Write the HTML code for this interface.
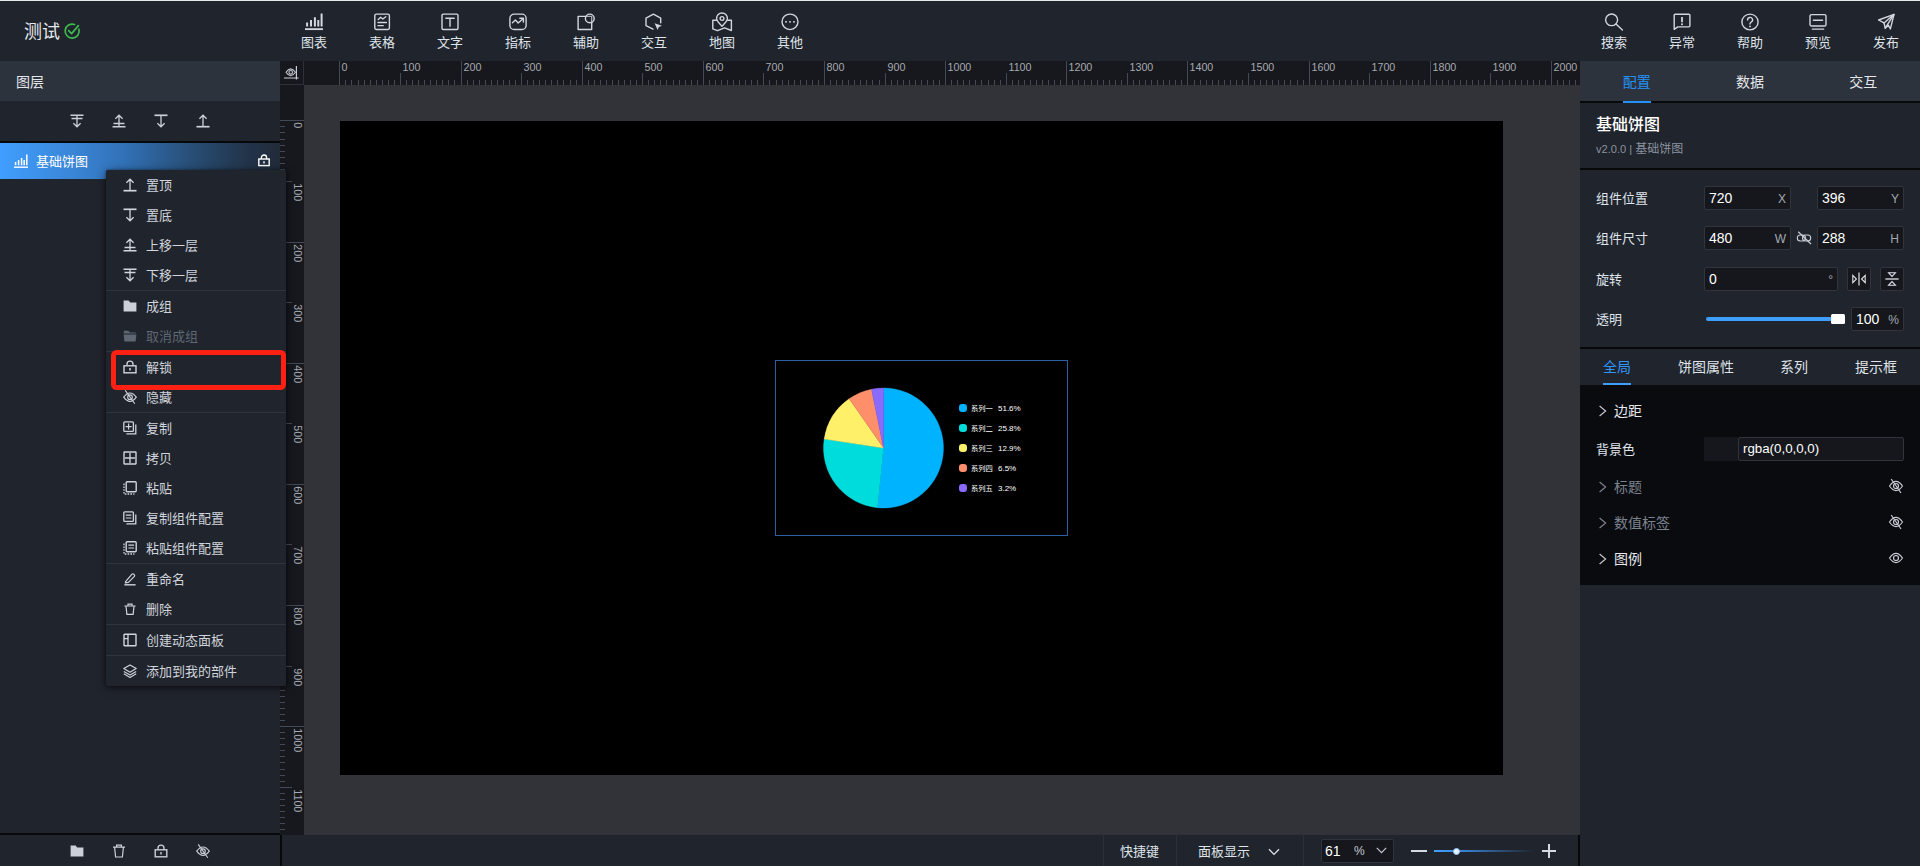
<!DOCTYPE html>
<html lang="zh-CN">
<head>
<meta charset="utf-8">
<title>测试</title>
<style>
*{box-sizing:border-box;margin:0;padding:0}
html,body{width:1920px;height:866px;overflow:hidden;background:#20242c}
body{position:relative;font-family:"Liberation Sans","Noto Sans CJK SC",sans-serif;font-size:13px;color:#d5d9e0;-webkit-font-smoothing:antialiased}
.abs{position:absolute}
svg{display:block;overflow:visible}
.ic{fill:none;stroke:currentColor;stroke-width:1.3;stroke-linecap:butt;stroke-linejoin:miter}
/* top bar */
#topline{left:0;top:0;width:1920px;height:1px;background:#e8e9eb}
#topbar{left:0;top:1px;width:1920px;height:60px;background:#20242c}
#title{left:24px;top:20px;height:24px;line-height:24px;font-size:18px;color:#e6e9ee;white-space:nowrap}
.nav{position:absolute;top:0;width:68px;height:60px;text-align:center;color:#dfe3ea}
.nav svg{position:absolute;left:25px;top:12.5px;width:18px;height:17.5px}
.nav span{position:absolute;left:0;width:68px;top:34px;height:18px;line-height:18px;font-size:13px;white-space:nowrap}
.nic{fill:none;stroke:#d3d6e0;stroke-width:1.4;stroke-linejoin:round;stroke-linecap:round}
/* left panel */
#left{left:0;top:61px;width:280px;height:805px;background:#20242c}
#lhead{left:0;top:0;width:280px;height:40px;background:#2d333d;line-height:42px;padding-left:16px;font-size:14px;color:#e3e6eb}
#ltools{left:0;top:40px;width:280px;height:40px;color:#ccd0d8}
#ltools svg,#lbot svg{position:absolute;width:14px;height:14px}
#lline{left:0;top:80px;width:280px;height:2px;background:#07080a}
#layer{left:0;top:82px;width:280px;height:36px;background:linear-gradient(90deg,#409eff 0%,#3a86d8 25%,#3170b5 45%,#2b5a8c 60%,#264566 75%,#22344a 88%,#212b39 100%);color:#fff}
#layer .t{left:36px;top:0;line-height:37px;font-size:13px;color:#fff;white-space:nowrap}
#lbotline{left:0;top:772px;width:280px;height:2px;background:#07080a}
#lbot{left:0;top:774px;width:280px;height:31px;color:#ccd0d8}
/* context menu */
#menu{left:106px;top:170px;width:180px;height:516px;background:#20242c;border-radius:2px;box-shadow:0 2px 10px rgba(0,0,0,.55),0 0 3px rgba(0,0,0,.4);color:#d0d4dc;z-index:20}
.mi{position:relative;height:30px;line-height:31px;padding-left:40px;font-size:13px;white-space:nowrap}
.mi svg{position:absolute;left:17px;top:8px;width:14px;height:14px}
.mi.dis{color:#5f6773}
.ms{height:1px;background:#2e333c}
#redbox{left:111px;top:350px;width:175px;height:40px;border:5px solid #ff2014;border-radius:5.5px;z-index:30}
/* rulers / canvas */
#stage{left:280px;top:61px;width:1300px;height:774px;background:#313338;overflow:hidden}
#rtop{left:24px;top:0;width:1276px;height:24px;background:#16181d}
#rleft{left:0;top:24px;width:24px;height:750px;background:#16181d}
#rcorner{left:0;top:0;width:24px;height:24px;background:#16181d;border-right:1px solid #2c3038;border-bottom:1px solid #2c3038;color:#c9cdd6}
#screen{left:60px;top:60px;width:1162.5px;height:653.5px;background:#000}
#comp{left:495px;top:299px;width:292.5px;height:175.5px;border:1px solid #2a5fa6}
/* bottom bar */
#bbar{left:280px;top:835px;width:1300px;height:31px;background:#20242c;border-left:2px solid #07080a;border-right:2px solid #07080a}
.vsep{position:absolute;top:0;width:1px;height:31px;background:#2b2f38}
/* right panel */
#right{left:1580px;top:61px;width:340px;height:805px;background:#20242c}
#rtabs{left:0;top:0;width:340px;height:40px;background:#2d333d}
#rtabs div{position:absolute;top:0;width:113.33px;height:40px;line-height:42.5px;text-align:center;font-size:14px;color:#e3e6eb}
.bline{position:absolute;left:0;width:340px;height:2px;background:#07080a}
.lbl{position:absolute;left:16px;height:24px;line-height:25px;font-size:13px;color:#dfe3ea;white-space:nowrap}
.inp{position:absolute;height:24px;background:#15171c;border:1px solid #30343c;border-radius:2px;line-height:22px;font-size:14px;color:#fff;padding-left:4px;white-space:nowrap}
.inp i{position:absolute;right:4px;top:1px;font-style:normal;font-size:12px;color:#a4a9b3}
.sec{position:absolute;left:0;width:340px;height:36px;line-height:36px;font-size:14px;color:#e6e9ee}
.sec .tx{position:absolute;left:34px;top:0}
.sec svg.ch{position:absolute;left:18px;top:12px;width:9px;height:12px;color:#c3c7cf}
.sec svg.eye{position:absolute;left:309px;top:10px;width:14px;height:14px}
.sec.off{color:#7b838f}
.sec.off svg.ch{color:#7b838f}
</style>
</head>
<body>
<div class="abs" id="topline"></div>
<div class="abs" id="topbar"></div>
<div class="abs" id="title">测试</div>
<svg class="abs" style="left:63px;top:22px;width:18px;height:18px" viewBox="0 0 18 18"><path d="M15.9 7.2A7 7 0 1 1 11.6 2.5" fill="none" stroke="#3dbb4f" stroke-width="1.7" stroke-linecap="round"/><path d="M5.6 8.6L8.6 11.6L15.4 3.6" fill="none" stroke="#3dbb4f" stroke-width="1.7" stroke-linecap="round" stroke-linejoin="round"/></svg>

<div class="nav" style="left:280px"><svg viewBox="0 0 18 18" preserveAspectRatio="none"><path d="M0 16.6H18" stroke="#d3d6e0" stroke-width="1.9" fill="none"/><path d="M2.1 9.8V14M6 7.2V14M9.9 4.4V14M13.3 7.2V14M16.6 0.4V14" stroke="#d3d6e0" stroke-width="2" fill="none"/></svg><span>图表</span></div>
<div class="nav" style="left:348px"><svg viewBox="0 0 18 18" preserveAspectRatio="none"><rect x="1.8" y="1.2" width="14.6" height="15.8" rx="1.5" class="nic" stroke-width="1.7"/><path d="M5.2 6.6L7.6 4.4L9.8 6.2L12.8 3.8" class="nic" stroke-width="1.2"/><path d="M5 9.8H13.4M5 13H10.2" class="nic" stroke-width="1.5"/></svg><span>表格</span></div>
<div class="nav" style="left:416px"><svg viewBox="0 0 18 18" preserveAspectRatio="none"><rect x="1" y="1.2" width="16" height="15.8" rx="1.2" class="nic" stroke-width="1.8"/><path d="M4.8 5.4H13.2M9 5.4V13.6" class="nic" stroke-width="1.6" stroke-linecap="butt"/></svg><span>文字</span></div>
<div class="nav" style="left:484px"><svg viewBox="0 0 18 18" preserveAspectRatio="none"><rect x="0.9" y="1.2" width="16.2" height="15.8" rx="4.2" class="nic" stroke-width="1.5"/><path d="M3.4 10L6.4 7.2L9.2 10.2L14 6" class="nic" stroke-width="1.3"/><path d="M10.8 5.4H14.4V9.2" class="nic" stroke-width="1.3"/></svg><span>指标</span></div>
<div class="nav" style="left:552px"><svg viewBox="0 0 18 18" preserveAspectRatio="none"><path d="M8.6 3.4H1.1V17H14.7V9.4" class="nic" stroke-width="1.7" stroke-linejoin="miter" stroke-linecap="butt"/><circle cx="12.8" cy="5.6" r="4.4" class="nic" stroke-width="1.3"/><path d="M8.6 3.4H14.7V9.4" class="nic" stroke-width="1.1" opacity=".75"/></svg><span>辅助</span></div>
<div class="nav" style="left:620px"><svg viewBox="0 0 18 18" preserveAspectRatio="none"><path d="M8 16.6L1 12.9V5.2L8.4 1.2L15.7 5.2V10" class="nic" stroke-width="1.6" stroke-linejoin="miter" stroke-linecap="butt"/><path d="M9.6 10.6L17 13.2L13.8 14.4L12.6 17.6Z" fill="#d3d6e0" stroke="none"/></svg><span>交互</span></div>
<div class="nav" style="left:688px"><svg viewBox="0 0 18 18" preserveAspectRatio="none"><path d="M9 13.6C6 10.4 3.6 8.4 3.6 5.4A5.4 5.4 0 0 1 14.4 5.4C14.4 8.4 12 10.4 9 13.6Z" class="nic" stroke-width="1.4"/><circle cx="9" cy="5.6" r="1.9" class="nic" stroke-width="1.3"/><path d="M3.4 7.4H-0.2V16.4L4.4 18.2L11.6 15.2L18.4 18V7.4H14.6" class="nic" stroke-width="1.5" stroke-linejoin="miter" stroke-linecap="butt"/></svg><span>地图</span></div>
<div class="nav" style="left:756px"><svg viewBox="0 0 18 18" preserveAspectRatio="none"><circle cx="9" cy="9.1" r="8" class="nic" stroke-width="1.5"/><circle cx="5" cy="9.1" r="1" fill="#d3d6e0"/><circle cx="9" cy="9.1" r="1" fill="#d3d6e0"/><circle cx="13" cy="9.1" r="1" fill="#d3d6e0"/></svg><span>其他</span></div>

<div class="nav" style="left:1580px"><svg viewBox="0 0 18 18" preserveAspectRatio="none"><circle cx="6.6" cy="7" r="6" class="nic" stroke-width="1.4"/><path d="M11 11.4L17.4 17.6" class="nic" stroke-width="1.5"/></svg><span>搜索</span></div>
<div class="nav" style="left:1648px"><svg viewBox="0 0 18 18" preserveAspectRatio="none"><path d="M1.2 16.8V2.4Q1.2 1.3 2.3 1.3H15.8Q16.9 1.3 16.9 2.4V13.2Q16.9 14.3 15.8 14.3H4.8Z" class="nic" stroke-width="1.7"/><path d="M9 4.2V9.4" stroke="#d3d6e0" stroke-width="1.8" fill="none"/><circle cx="9" cy="11.6" r="1" fill="#d3d6e0"/></svg><span>异常</span></div>
<div class="nav" style="left:1716px"><svg viewBox="0 0 18 18" preserveAspectRatio="none"><circle cx="9" cy="9.2" r="8.1" class="nic" stroke-width="1.5"/><path d="M6.6 7.2A2.5 2.5 0 1 1 10.4 9.2Q9 10 9 11.4" class="nic" stroke-width="1.4"/><circle cx="9" cy="13.8" r="0.9" fill="#d3d6e0"/></svg><span>帮助</span></div>
<div class="nav" style="left:1784px"><svg viewBox="0 0 18 18" preserveAspectRatio="none"><rect x="1" y="1.6" width="16" height="11.8" rx="1.6" class="nic" stroke-width="1.7"/><path d="M4.4 7.4H13.6" class="nic" stroke-width="1.8" stroke-linecap="butt"/><path d="M3.4 16.6H14.6" class="nic" stroke-width="1.5" stroke-linecap="butt"/></svg><span>预览</span></div>
<div class="nav" style="left:1852px"><svg viewBox="0 0 18 18" preserveAspectRatio="none"><path d="M17 1.4L1.6 7.2L7 10.2L8.2 15.6L11.4 12.6L13.4 16.4Z" class="nic" stroke-width="1.4" stroke-linejoin="miter"/><path d="M7 10.2L17 1.4L8.2 15.6" class="nic" stroke-width="1.2" stroke-linejoin="miter"/></svg><span>发布</span></div>
<div class="abs" id="left">
 <div class="abs" id="lhead">图层</div>
 <div class="abs" id="ltools">
  <svg style="left:70px;top:13px" viewBox="0 0 14 14" class="ic"><path d="M0.5 1.2H13.5M1.5 4.4H12.5" stroke-width="1.5"/><path d="M7 1.6V12.4M3.4 9.2L7 12.8L10.6 9.2"/></svg>
  <svg style="left:112px;top:13px" viewBox="0 0 14 14" class="ic"><path d="M1.5 9.6H12.5M0.5 12.8H13.5" stroke-width="1.5"/><path d="M7 12.4V1.6M3.4 4.8L7 1.2L10.6 4.8"/></svg>
  <svg style="left:154px;top:13px" viewBox="0 0 14 14" class="ic"><path d="M0.5 1.3H13.5" stroke-width="1.7"/><path d="M7 2V12.4M3.4 9.2L7 12.8L10.6 9.2"/></svg>
  <svg style="left:196px;top:13px" viewBox="0 0 14 14" class="ic"><path d="M0.5 12.7H13.5" stroke-width="1.7"/><path d="M7 12V1.6M3.4 4.8L7 1.2L10.6 4.8"/></svg>
 </div>
 <div class="abs" id="lline"></div>
 <div class="abs" id="layer">
  <svg class="abs" style="left:14px;top:11px;width:14px;height:14px" viewBox="0 0 14 14"><path d="M0 13.2H14" stroke="#fff" stroke-width="1.4" fill="none"/><path d="M1.6 8V11.2M4.6 6V11.2M7.6 4V11.2M10.2 6V11.2M12.8 0.4V11.2" stroke="#fff" stroke-width="1.5" fill="none"/></svg>
  <div class="abs t">基础饼图</div>
  <svg class="abs" style="left:258px;top:11px;width:12px;height:13px" viewBox="0 0 12 13"><rect x="0.8" y="5" width="10.4" height="6.6" fill="none" stroke="#fff" stroke-width="1.4"/><path d="M3.4 5V3.6A2.6 2.6 0 0 1 8.6 3.6V5" fill="none" stroke="#fff" stroke-width="1.3"/><path d="M6 7.2V9.6" stroke="#fff" stroke-width="1.4"/></svg>
 </div>
 <div class="abs" id="lbotline"></div>
 <div class="abs" id="lbot">
  <svg style="left:70px;top:9px" viewBox="0 0 14 14"><path d="M0.6 1.6H5.6L7.2 3.4H13.4V12.6H0.6Z" fill="#ccd0d8"/></svg>
  <svg style="left:112px;top:9px" viewBox="0 0 14 14" class="ic"><path d="M1 3.2H13M4.6 3V1.2H9.4V3M2.6 3.4L3.6 13H10.4L11.4 3.4" stroke-width="1.2"/></svg>
  <svg style="left:154px;top:9px" viewBox="0 0 14 14" class="ic"><rect x="1.2" y="5.8" width="11.6" height="7" stroke-width="1.4"/><path d="M4 5.8V4.2A3 3 0 0 1 10 4.2V5.8" stroke-width="1.3"/><path d="M7 8V10.6" stroke-width="1.4"/></svg>
  <svg style="left:196px;top:9px" viewBox="0 0 14 14" class="ic"><path d="M0.7 7.2Q7 -1.2 13.3 7.2Q7 15.6 0.7 7.2Z" stroke-width="1.1"/><circle cx="7" cy="7.2" r="2.3" stroke-width="1.1"/><path d="M2.2 0.4L11.8 13.8" stroke-width="1.1"/></svg>
 </div>
</div>
<div class="abs" id="stage">
 <div class="abs" id="screen"></div>
 <div class="abs" id="comp">
<svg class="abs" style="left:0;top:0;width:290px;height:173px" viewBox="0 0 290 173" font-family="Liberation Sans, Noto Sans CJK SC, sans-serif" font-size="7.3" fill="#fff">
<path d="M107.5 87L107.5 27A60 60 0 1 1 101.48 146.7Z" fill="#00b3ff" stroke="#00b3ff" stroke-width="0.4"/>
<path d="M107.5 87L101.48 146.7A60 60 0 0 1 48.18 77.99Z" fill="#00dcdc" stroke="#00dcdc" stroke-width="0.4"/>
<path d="M107.5 87L48.18 77.99A60 60 0 0 1 73.15 37.8Z" fill="#fff06a" stroke="#fff06a" stroke-width="0.4"/>
<path d="M107.5 87L73.15 37.8A60 60 0 0 1 95.52 28.21Z" fill="#ff8f6b" stroke="#ff8f6b" stroke-width="0.4"/>
<path d="M107.5 87L95.52 28.21A60 60 0 0 1 107.5 27Z" fill="#8a6bff" stroke="#8a6bff" stroke-width="0.4"/>
<rect x="183" y="43" width="8" height="8" rx="3.2" fill="#00b3ff"/>
<text x="195" y="49.7">系列一</text><text x="222" y="49.8" font-size="8">51.6%</text>
<rect x="183" y="63" width="8" height="8" rx="3.2" fill="#00dcdc"/>
<text x="195" y="69.7">系列二</text><text x="222" y="69.8" font-size="8">25.8%</text>
<rect x="183" y="83" width="8" height="8" rx="3.2" fill="#fff06a"/>
<text x="195" y="89.7">系列三</text><text x="222" y="89.8" font-size="8">12.9%</text>
<rect x="183" y="103" width="8" height="8" rx="3.2" fill="#ff8f6b"/>
<text x="195" y="109.7">系列四</text><text x="222" y="109.8" font-size="8">6.5%</text>
<rect x="183" y="123" width="8" height="8" rx="3.2" fill="#8a6bff"/>
<text x="195" y="129.7">系列五</text><text x="222" y="129.8" font-size="8">3.2%</text>
</svg>
 </div>
 <div class="abs" id="rtop">
<svg class="abs" style="left:0;top:0;width:1276px;height:24px" viewBox="0 0 1276 24" font-family="Liberation Sans, sans-serif" font-size="10.7" fill="#a6aab1">
<path d="M41.5 19V24M47.5 19V24M54.5 19V24M60.5 19V24M66.5 19V24M72.5 19V24M78.5 19V24M84.5 19V24M90.5 19V24M102.5 19V24M108.5 19V24M114.5 19V24M120.5 19V24M126.5 19V24M132.5 19V24M138.5 19V24M144.5 19V24M150.5 19V24M163.5 19V24M169.5 19V24M175.5 19V24M181.5 19V24M187.5 19V24M193.5 19V24M199.5 19V24M205.5 19V24M211.5 19V24M223.5 19V24M229.5 19V24M235.5 19V24M241.5 19V24M247.5 19V24M253.5 19V24M259.5 19V24M266.5 19V24M272.5 19V24M284.5 19V24M290.5 19V24M296.5 19V24M302.5 19V24M308.5 19V24M314.5 19V24M320.5 19V24M326.5 19V24M332.5 19V24M344.5 19V24M350.5 19V24M356.5 19V24M362.5 19V24M369.5 19V24M375.5 19V24M381.5 19V24M387.5 19V24M393.5 19V24M405.5 19V24M411.5 19V24M417.5 19V24M423.5 19V24M429.5 19V24M435.5 19V24M441.5 19V24M447.5 19V24M453.5 19V24M465.5 19V24M472.5 19V24M478.5 19V24M484.5 19V24M490.5 19V24M496.5 19V24M502.5 19V24M508.5 19V24M514.5 19V24M526.5 19V24M532.5 19V24M538.5 19V24M544.5 19V24M550.5 19V24M556.5 19V24M562.5 19V24M568.5 19V24M575.5 19V24M587.5 19V24M593.5 19V24M599.5 19V24M605.5 19V24M611.5 19V24M617.5 19V24M623.5 19V24M629.5 19V24M635.5 19V24M647.5 19V24M653.5 19V24M659.5 19V24M665.5 19V24M671.5 19V24M677.5 19V24M684.5 19V24M690.5 19V24M696.5 19V24M708.5 19V24M714.5 19V24M720.5 19V24M726.5 19V24M732.5 19V24M738.5 19V24M744.5 19V24M750.5 19V24M756.5 19V24M768.5 19V24M774.5 19V24M780.5 19V24M787.5 19V24M793.5 19V24M799.5 19V24M805.5 19V24M811.5 19V24M817.5 19V24M829.5 19V24M835.5 19V24M841.5 19V24M847.5 19V24M853.5 19V24M859.5 19V24M865.5 19V24M871.5 19V24M877.5 19V24M890.5 19V24M896.5 19V24M902.5 19V24M908.5 19V24M914.5 19V24M920.5 19V24M926.5 19V24M932.5 19V24M938.5 19V24M950.5 19V24M956.5 19V24M962.5 19V24M968.5 19V24M974.5 19V24M980.5 19V24M986.5 19V24M993.5 19V24M999.5 19V24M1011.5 19V24M1017.5 19V24M1023.5 19V24M1029.5 19V24M1035.5 19V24M1041.5 19V24M1047.5 19V24M1053.5 19V24M1059.5 19V24M1071.5 19V24M1077.5 19V24M1083.5 19V24M1089.5 19V24M1096.5 19V24M1102.5 19V24M1108.5 19V24M1114.5 19V24M1120.5 19V24M1132.5 19V24M1138.5 19V24M1144.5 19V24M1150.5 19V24M1156.5 19V24M1162.5 19V24M1168.5 19V24M1174.5 19V24M1180.5 19V24M1192.5 19V24M1198.5 19V24M1205.5 19V24M1211.5 19V24M1217.5 19V24M1223.5 19V24M1229.5 19V24M1235.5 19V24M1241.5 19V24M1253.5 19V24M1259.5 19V24M1265.5 19V24M1271.5 19V24" stroke="#434955" stroke-width="1" fill="none"/>
<path d="M96.5 12V24M217.5 12V24M338.5 12V24M459.5 12V24M581.5 12V24M702.5 12V24M823.5 12V24M944.5 12V24M1065.5 12V24M1186.5 12V24M35.5 0V24M157.5 0V24M278.5 0V24M399.5 0V24M520.5 0V24M641.5 0V24M762.5 0V24M883.5 0V24M1005.5 0V24M1126.5 0V24M1247.5 0V24" stroke="#434955" stroke-width="1" fill="none"/>
<text x="37.5" y="9.7">0</text>
<text x="98.5" y="9.7">100</text>
<text x="159.5" y="9.7">200</text>
<text x="219.5" y="9.7">300</text>
<text x="280.5" y="9.7">400</text>
<text x="340.5" y="9.7">500</text>
<text x="401.5" y="9.7">600</text>
<text x="461.5" y="9.7">700</text>
<text x="522.5" y="9.7">800</text>
<text x="583.5" y="9.7">900</text>
<text x="643.5" y="9.7">1000</text>
<text x="704.5" y="9.7">1100</text>
<text x="764.5" y="9.7">1200</text>
<text x="825.5" y="9.7">1300</text>
<text x="885.5" y="9.7">1400</text>
<text x="946.5" y="9.7">1500</text>
<text x="1007.5" y="9.7">1600</text>
<text x="1067.5" y="9.7">1700</text>
<text x="1128.5" y="9.7">1800</text>
<text x="1188.5" y="9.7">1900</text>
<text x="1249.5" y="9.7">2000</text>
</svg>
 </div>
 <div class="abs" id="rleft">
<svg class="abs" style="left:0;top:0;width:24px;height:750px" viewBox="0 0 24 750" font-family="Liberation Sans, sans-serif" font-size="10.7" fill="#a6aab1">
<path d="M0 41.5H5M0 47.5H5M0 54.5H5M0 60.5H5M0 66.5H5M0 72.5H5M0 78.5H5M0 84.5H5M0 90.5H5M0 102.5H5M0 108.5H5M0 114.5H5M0 120.5H5M0 126.5H5M0 132.5H5M0 138.5H5M0 144.5H5M0 150.5H5M0 163.5H5M0 169.5H5M0 175.5H5M0 181.5H5M0 187.5H5M0 193.5H5M0 199.5H5M0 205.5H5M0 211.5H5M0 223.5H5M0 229.5H5M0 235.5H5M0 241.5H5M0 247.5H5M0 253.5H5M0 259.5H5M0 266.5H5M0 272.5H5M0 284.5H5M0 290.5H5M0 296.5H5M0 302.5H5M0 308.5H5M0 314.5H5M0 320.5H5M0 326.5H5M0 332.5H5M0 344.5H5M0 350.5H5M0 356.5H5M0 362.5H5M0 369.5H5M0 375.5H5M0 381.5H5M0 387.5H5M0 393.5H5M0 405.5H5M0 411.5H5M0 417.5H5M0 423.5H5M0 429.5H5M0 435.5H5M0 441.5H5M0 447.5H5M0 453.5H5M0 465.5H5M0 472.5H5M0 478.5H5M0 484.5H5M0 490.5H5M0 496.5H5M0 502.5H5M0 508.5H5M0 514.5H5M0 526.5H5M0 532.5H5M0 538.5H5M0 544.5H5M0 550.5H5M0 556.5H5M0 562.5H5M0 568.5H5M0 575.5H5M0 587.5H5M0 593.5H5M0 599.5H5M0 605.5H5M0 611.5H5M0 617.5H5M0 623.5H5M0 629.5H5M0 635.5H5M0 647.5H5M0 653.5H5M0 659.5H5M0 665.5H5M0 671.5H5M0 677.5H5M0 684.5H5M0 690.5H5M0 696.5H5M0 708.5H5M0 714.5H5M0 720.5H5M0 726.5H5M0 732.5H5M0 738.5H5M0 744.5H5" stroke="#434955" stroke-width="1" fill="none"/>
<path d="M0 96.5H12M0 217.5H12M0 338.5H12M0 459.5H12M0 581.5H12M0 702.5H12M0 35.5H24M0 157.5H24M0 278.5H24M0 399.5H24M0 520.5H24M0 641.5H24" stroke="#434955" stroke-width="1" fill="none"/>
<text transform="translate(13.8 37.3) rotate(90)">0</text>
<text transform="translate(13.8 98.3) rotate(90)">100</text>
<text transform="translate(13.8 159.3) rotate(90)">200</text>
<text transform="translate(13.8 219.3) rotate(90)">300</text>
<text transform="translate(13.8 280.3) rotate(90)">400</text>
<text transform="translate(13.8 340.3) rotate(90)">500</text>
<text transform="translate(13.8 401.3) rotate(90)">600</text>
<text transform="translate(13.8 461.3) rotate(90)">700</text>
<text transform="translate(13.8 522.3) rotate(90)">800</text>
<text transform="translate(13.8 583.3) rotate(90)">900</text>
<text transform="translate(13.8 643.3) rotate(90)">1000</text>
<text transform="translate(13.8 704.3) rotate(90)">1100</text>
</svg>
 </div>
 <div class="abs" id="rcorner"><svg class="abs ic" style="left:4px;top:5px;width:15px;height:14px" viewBox="0 0 15 14"><path d="M2 6.3Q6.7 -0.5 11.4 6.3Q6.7 13.1 2 6.3Z" stroke-width="1.1"/><circle cx="6.7" cy="6.3" r="1.8" stroke-width="1.1"/><path d="M12.4 0V13.6M0 12H14.6" stroke-width="1.2"/></svg></div>
</div>
<div class="abs" id="bbar">
 <div class="vsep" style="left:821px"></div>
 <div class="vsep" style="left:894px"></div>
 <div class="vsep" style="left:1021px"></div>
 <div class="abs" style="left:838px;top:6px;line-height:22px;font-size:13px;color:#dfe3ea;white-space:nowrap">快捷键</div>
 <div class="abs" style="left:916px;top:6px;line-height:22px;font-size:13px;color:#dfe3ea;white-space:nowrap">面板显示</div>
 <svg class="abs ic" style="left:986px;top:13px;width:12px;height:8px;color:#dfe3ea" viewBox="0 0 12 8"><path d="M1 1.2L6 6.4L11 1.2" stroke-width="1.3"/></svg>
 <div class="abs" style="left:1038.6px;top:4px;width:73px;height:24px;background:#15171c;border:1px solid #30343c;border-radius:2px"></div>
 <div class="abs" style="left:1043px;top:5px;line-height:22px;font-size:14px;color:#fff">61</div>
 <div class="abs" style="left:1072px;top:5px;line-height:22px;font-size:12px;color:#c4c8d0">%</div>
 <svg class="abs ic" style="left:1094px;top:12px;width:11px;height:7px;color:#c4c8d0" viewBox="0 0 11 7"><path d="M0.8 0.8L5.5 5.6L10.2 0.8" stroke-width="1.2"/></svg>
 <div class="abs" style="left:1129px;top:15px;width:16px;height:2px;background:#d5d9e0"></div>
 <div class="abs" style="left:1152px;top:15px;width:100px;height:2px;background:linear-gradient(90deg,#409eff 0%,#3a8ae0 25%,rgba(58,130,210,.55) 60%,rgba(58,130,210,0) 100%)"></div>
 <div class="abs" style="left:1170.5px;top:12.5px;width:7px;height:7px;border-radius:50%;background:#e8f3ff;border:1.5px solid #8cc3fb"></div>
 <div class="abs" style="left:1260px;top:15px;width:14px;height:2px;background:#d5d9e0"></div>
 <div class="abs" style="left:1266px;top:9px;width:2px;height:14px;background:#d5d9e0"></div>
</div>
<div class="abs" id="menu">
 <div class="mi"><svg viewBox="0 0 14 14" class="ic"><path d="M0.5 12.7H13.5" stroke-width="1.7"/><path d="M7 12V1.6M3.4 4.8L7 1.2L10.6 4.8"/></svg>置顶</div>
 <div class="mi"><svg viewBox="0 0 14 14" class="ic"><path d="M0.5 1.3H13.5" stroke-width="1.7"/><path d="M7 2V12.4M3.4 9.2L7 12.8L10.6 9.2"/></svg>置底</div>
 <div class="mi"><svg viewBox="0 0 14 14" class="ic"><path d="M1.5 9.6H12.5M0.5 12.8H13.5" stroke-width="1.5"/><path d="M7 12.4V1.6M3.4 4.8L7 1.2L10.6 4.8"/></svg>上移一层</div>
 <div class="mi"><svg viewBox="0 0 14 14" class="ic"><path d="M0.5 1.2H13.5M1.5 4.4H12.5" stroke-width="1.5"/><path d="M7 1.6V12.4M3.4 9.2L7 12.8L10.6 9.2"/></svg>下移一层</div>
 <div class="ms"></div>
 <div class="mi"><svg viewBox="0 0 14 14"><path d="M0.6 1.6H5.6L7.2 3.4H13.4V12.6H0.6Z" fill="#ccd0d8"/></svg>成组</div>
 <div class="mi dis"><svg viewBox="0 0 14 14"><path d="M0.8 1.8H5.4L6.8 3.4H12.8V4.6H0.8Z" fill="#5f6773"/><path d="M0.6 5.6H13.4L12.6 12.6H1.4Z" fill="#5f6773"/></svg>取消成组</div>
 <div class="ms"></div>
 <div class="mi"><svg viewBox="0 0 14 14" class="ic"><rect x="1" y="5.8" width="12" height="7" stroke-width="1.4"/><path d="M4 5.8V4.2A3 3 0 0 1 10 4.2V5.8" stroke-width="1.3"/><path d="M7 8V10.6" stroke-width="1.5"/></svg>解锁</div>
 <div class="mi"><svg viewBox="0 0 14 14" class="ic"><path d="M0.7 7.2Q7 -1.2 13.3 7.2Q7 15.6 0.7 7.2Z" stroke-width="1.1"/><circle cx="7" cy="7.2" r="2.3" stroke-width="1.1"/><path d="M2.2 0.4L11.8 13.8" stroke-width="1.1"/></svg>隐藏</div>
 <div class="ms"></div>
 <div class="mi"><svg viewBox="0 0 14 14" class="ic"><rect x="0.8" y="0.8" width="9.6" height="9.6" rx="1" stroke-width="1.3"/><path d="M5.6 2.6V8.6M2.6 5.6H8.6" stroke-width="1.2"/><path d="M12.8 3.4V12.8H3.4" stroke-width="1.3"/></svg>复制</div>
 <div class="mi"><svg viewBox="0 0 14 14" class="ic"><rect x="1" y="1" width="12" height="12" rx="0.4" stroke-width="1.4"/><path d="M7 2V12M2 7H12" stroke-width="1.3"/></svg>拷贝</div>
 <div class="mi"><svg viewBox="0 0 14 14" class="ic"><rect x="3.2" y="0.8" width="10" height="10" rx="1" stroke-width="1.4"/><path d="M1 2.6V13H11.4" stroke-width="1.3" stroke-dasharray="1.6 1.2"/></svg>粘贴</div>
 <div class="mi"><svg viewBox="0 0 14 14" class="ic"><rect x="0.8" y="0.8" width="9.6" height="9.6" rx="1" stroke-width="1.3"/><path d="M2.8 4.2H8.4M2.8 7H8.4" stroke-width="1.2"/><path d="M12.8 3.4V12.8H3.4" stroke-width="1.3"/></svg>复制组件配置</div>
 <div class="mi"><svg viewBox="0 0 14 14" class="ic"><rect x="3.2" y="0.8" width="10" height="10" rx="1" stroke-width="1.4"/><path d="M5.4 4.2H11M5.4 7H11" stroke-width="1.2"/><path d="M1 2.6V13H11.4" stroke-width="1.3" stroke-dasharray="1.6 1.2"/></svg>粘贴组件配置</div>
 <div class="ms"></div>
 <div class="mi"><svg viewBox="0 0 14 14" class="ic"><path d="M1.4 12.8H12.6" stroke-width="1.4"/><path d="M2.6 9.6L9 2.2Q9.8 1.4 10.8 2.2L11.4 2.8Q12 3.6 11.4 4.4L5.4 10.4L2.4 10.8Z" stroke-width="1.2" stroke-linejoin="round"/></svg>重命名</div>
 <div class="mi"><svg viewBox="0 0 14 14" class="ic"><path d="M1.4 4H12.6M5 3.8V2.2H9V3.8M3 4.2L3.9 12.4H10.1L11 4.2" stroke-width="1.2"/></svg>删除</div>
 <div class="ms"></div>
 <div class="mi"><svg viewBox="0 0 14 14" class="ic"><rect x="1" y="1.2" width="12" height="11.6" rx="0.6" stroke-width="1.4"/><path d="M5 1.2V12.8M1 5.6H5" stroke-width="1.3"/></svg>创建动态面板</div>
 <div class="ms"></div>
 <div class="mi"><svg viewBox="0 0 14 14" class="ic"><path d="M7 1L13.2 4.6L7 8.2L0.8 4.6Z" stroke-width="1.2" stroke-linejoin="round"/><path d="M0.8 7.4L7 11L13.2 7.4M0.8 9.8L7 13.4L13.2 9.8" stroke-width="1.1" stroke-linejoin="round"/></svg>添加到我的部件</div>
</div>
<div class="abs" id="redbox"></div>
<div class="abs" id="right">
 <div class="abs" id="rtabs">
  <div style="left:0;color:#2491f7">配置</div>
  <div style="left:113.33px">数据</div>
  <div style="left:226.66px">交互</div>
 </div>
 <div class="bline" style="top:40px"></div>
 <div class="abs" style="left:43px;top:40px;width:28px;height:2px;background:#2491f7"></div>
 <div class="abs" style="left:16px;top:52px;line-height:24px;font-size:16px;font-weight:500;color:#fff;white-space:nowrap">基础饼图</div>
 <div class="abs" style="left:16px;top:78px;line-height:20px;font-size:12px;color:#8b929e;white-space:nowrap"><span style="font-size:11.1px">v2.0.0 | </span>基础饼图</div>
 <div class="bline" style="top:107px"></div>

 <div class="lbl" style="top:125px">组件位置</div>
 <div class="inp" style="left:124px;top:125px;width:87px">720<i>X</i></div>
 <div class="inp" style="left:237px;top:125px;width:87px">396<i>Y</i></div>

 <div class="lbl" style="top:165px">组件尺寸</div>
 <div class="inp" style="left:124px;top:165px;width:87px">480<i>W</i></div>
 <svg class="abs ic" style="left:216px;top:170px;width:16px;height:14px;color:#c9cdd5" viewBox="0 0 16 14"><rect x="1.3" y="4" width="8.2" height="6" rx="3" stroke-width="1.1"/><rect x="6.5" y="4" width="8.2" height="6" rx="3" stroke-width="1.1"/><path d="M2.2 0.8L15 13" stroke-width="1.2"/></svg>
 <div class="inp" style="left:237px;top:165px;width:87px">288<i>H</i></div>

 <div class="lbl" style="top:206px">旋转</div>
 <div class="inp" style="left:124px;top:206px;width:134px">0<i style="top:1px">°</i></div>
 <div class="inp" style="left:267px;top:206px;width:24px;padding:0"><svg style="position:absolute;left:4px;top:4px;width:14px;height:14px;color:#dfe3ea" class="ic" viewBox="0 0 14 14"><path d="M7 0.4V13.6" stroke-width="1.2"/><path d="M0.8 3.4L4.4 7L0.8 10.6ZM13.2 3.4L9.6 7L13.2 10.6Z" stroke-width="1.1"/></svg></div>
 <div class="inp" style="left:300px;top:206px;width:24px;padding:0"><svg style="position:absolute;left:4px;top:4px;width:14px;height:14px;color:#dfe3ea" class="ic" viewBox="0 0 14 14"><path d="M0.4 7H13.6" stroke-width="1.3"/><path d="M3.6 0.8L7 4.4L10.4 0.8ZM3.6 13.2L7 9.6L10.4 13.2Z" stroke-width="1.1"/></svg></div>

 <div class="lbl" style="top:246px">透明</div>
 <div class="abs" style="left:126px;top:256px;width:136px;height:4px;border-radius:2px;background:#409eff"></div>
 <div class="abs" style="left:251px;top:253px;width:14px;height:10px;border-radius:1.5px;background:#fff"></div>
 <div class="inp" style="left:271px;top:246px;width:53px;padding-left:4px">100<i>%</i></div>

 <div class="bline" style="top:286px"></div>
 <div class="abs" style="left:23px;top:288px;line-height:36px;font-size:14px;color:#2f97fb;white-space:nowrap">全局</div>
 <div class="abs" style="left:98px;top:288px;line-height:36px;font-size:14px;color:#dfe3ea;white-space:nowrap">饼图属性</div>
 <div class="abs" style="left:200px;top:288px;line-height:36px;font-size:14px;color:#dfe3ea;white-space:nowrap">系列</div>
 <div class="abs" style="left:275px;top:288px;line-height:36px;font-size:14px;color:#dfe3ea;white-space:nowrap">提示框</div>
 <div class="abs" style="left:23px;top:322px;width:28px;height:2px;background:#409eff"></div>

 <div class="abs" style="left:0;top:324px;width:340px;height:200px;background:#0a0b0f"></div>
 <div class="sec" style="top:332px"><svg class="ch ic" viewBox="0 0 9 12"><path d="M1.6 1L7.6 6L1.6 11" stroke-width="1.2"/></svg><span class="tx">边距</span></div>
 <div class="lbl" style="top:376px">背景色</div>
 <div class="abs" style="left:124px;top:376px;width:34px;height:24px;background:#15171c"></div>
 <div class="inp" style="left:158px;top:376px;width:166px;font-size:13.3px;padding-left:4px">rgba(0,0,0,0)</div>
 <div class="sec off" style="top:408px"><svg class="ch ic" viewBox="0 0 9 12"><path d="M1.6 1L7.6 6L1.6 11" stroke-width="1.2"/></svg><span class="tx">标题</span><svg class="eye ic" style="color:#c9cdd5" viewBox="0 0 14 14"><path d="M0.5 7Q7 -2.2 13.5 7Q7 16.2 0.5 7Z" stroke-width="1.15"/><circle cx="7" cy="7" r="2.5" stroke-width="1.2"/><path d="M2.2 0L12 14" stroke-width="1.15"/></svg></div>
 <div class="sec off" style="top:444px"><svg class="ch ic" viewBox="0 0 9 12"><path d="M1.6 1L7.6 6L1.6 11" stroke-width="1.2"/></svg><span class="tx">数值标签</span><svg class="eye ic" style="color:#c9cdd5" viewBox="0 0 14 14"><path d="M0.5 7Q7 -2.2 13.5 7Q7 16.2 0.5 7Z" stroke-width="1.15"/><circle cx="7" cy="7" r="2.5" stroke-width="1.2"/><path d="M2.2 0L12 14" stroke-width="1.15"/></svg></div>
 <div class="sec" style="top:480px"><svg class="ch ic" viewBox="0 0 9 12"><path d="M1.6 1L7.6 6L1.6 11" stroke-width="1.2"/></svg><span class="tx">图例</span><svg class="eye ic" style="color:#c9cdd5" viewBox="0 0 14 14"><path d="M0.5 7Q7 -2.2 13.5 7Q7 16.2 0.5 7Z" stroke-width="1.15"/><circle cx="7" cy="7" r="2.5" stroke-width="1.2"/></svg></div>
</div>
</body>
</html>
